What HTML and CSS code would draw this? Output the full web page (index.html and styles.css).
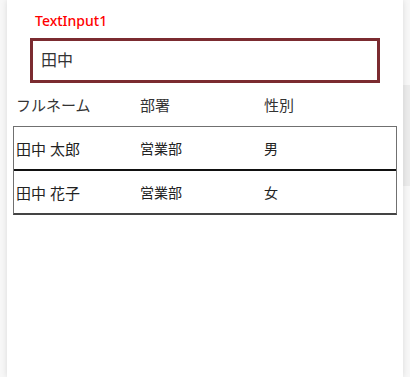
FILE: index.html
```html
<!DOCTYPE html>
<html lang="ja">
<head>
    <meta charset="UTF-8">
    <meta name="viewport" content="width=device-width, initial-scale=1.0">
    <title>社員検索</title>
    <link rel="stylesheet" href="styles.css">
</head>
<body>
    <div class="screen">
        <div class="label">TextInput1</div>
        <div class="search">田中</div>

        <div class="head">
            <span class="col name">フルネーム</span>
            <span class="col dept">部署</span>
            <span class="col sex">性別</span>
        </div>

        <div class="gallery">
            <div class="row">
                <span class="col name">田中 太郎</span>
                <span class="col dept small">営業部</span>
                <span class="col sex small">男</span>
            </div>
            <div class="row">
                <span class="col name">田中 花子</span>
                <span class="col dept small">営業部</span>
                <span class="col sex small">女</span>
            </div>
        </div>
    </div>
    <div class="side">
        <div class="side-bar"></div>
    </div>
</body>
</html>
```

FILE: styles.css
```css
body {
    margin: 0;
    padding: 0 0 0 7px;
    height: 377px;
    overflow: hidden;
    display: flex;
    background: #f7f7f7;
    font-family: "Noto Sans", "Noto Sans CJK JP", sans-serif;
    color: #333;
}

.screen {
    width: 396px;
    height: 377px;
    background: #fff;
    box-shadow: 0 0 6px rgba(0, 0, 0, 0.12);
    box-sizing: border-box;
    padding-top: 10px;
    position: relative;
    z-index: 1;
}

.side {
    flex: 1;
    padding-top: 85px;
}

.side-bar {
    height: 101px;
    background: #ebebeb;
}

.label {
    margin-left: 28px;
    height: 22px;
    font-size: 14px;
    line-height: 22px;
    font-weight: 500;
    color: #ff0000;
}

.search {
    margin: 6px 0 0 23px;
    width: 350px;
    height: 45px;
    box-sizing: border-box;
    border: 3px solid #7b2b30;
    padding-left: 8px;
    font-size: 16px;
    line-height: 38px;
    color: #333;
}

.head {
    display: flex;
    height: 43px;
    align-items: center;
    font-size: 15px;
    color: #333;
}

.col {
    display: block;
}

.name {
    width: 124px;
    padding-left: 9px;
}

.dept {
    width: 124px;
}

.gallery {
    margin-left: 6px;
    width: 384px;
    border: 1px solid #707070;
    border-bottom: 2px solid #444;
    box-sizing: border-box;
}

.gallery .name {
    padding-left: 2px;
}

.row {
    display: flex;
    align-items: center;
    height: 42px;
    font-size: 15px;
    color: #222;
}

.row + .row {
    border-top: 2px solid #111;
}

.small {
    font-size: 14px;
}
```
